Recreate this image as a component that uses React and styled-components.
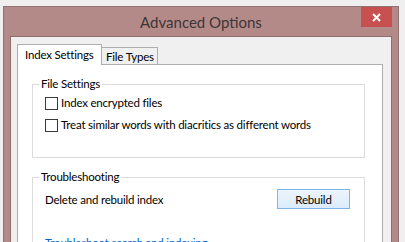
import React from 'react'
import styled, { createGlobalStyle } from 'styled-components'

const GlobalStyle = createGlobalStyle`
    html, body {
        margin: 0;
        padding: 0;
        background: #efefef;
        overflow: hidden;
    }
    body {
        width: 405px;
        height: 242px;
        box-sizing: border-box;
        padding: 6px 0 0 3px;
        font-family: Lato, Roboto, "Liberation Sans", sans-serif;
        font-size: 11.5px;
        letter-spacing: -0.2px;
        color: #000;
    }
`;

const Window = styled.div`
    width: 396px;
    height: 236px;
    overflow: hidden;
    box-sizing: border-box;
    border: 1px solid #917373;
    border-bottom: none;
    background: #b48a89;
    padding: 0 6px;
    display: flex;
    flex-direction: column;
`;

const TitleBar = styled.div`
    flex: none;
    height: 29px;
    display: grid;
    grid-template-columns: 1fr auto 1fr;
    align-items: center;
`;

const Title = styled.div`
    grid-column: 2;
    font-size: 15px;
    letter-spacing: 0;
    color: #3c3636;
    margin-top: 1px;
`;

const CloseButton = styled.div`
    grid-column: 3;
    justify-self: end;
    align-self: start;
    width: 31px;
    height: 20px;
    background: #c75050;
    display: flex;
    align-items: center;
    justify-content: center;
`;

const Client = styled.div`
    flex: 1;
    min-height: 0;
    border: 1px solid #8d6f6f;
    border-bottom: none;
    background: #f0f0f0;
    padding: 7px 0 0 6px;
    display: flex;
    flex-direction: column;
`;

const TabRow = styled.div`
    flex: none;
    display: flex;
    align-items: flex-end;
    height: 20px;
`;

const Tab = styled.div`
    position: relative;
    box-sizing: border-box;
    white-space: nowrap;
    border: 1px solid #adadad;
    border-bottom: none;
    display: flex;
    align-items: center;
    background: ${p => (p.active ? '#fff' : '#f0f0f0')};
    height: ${p => (p.active ? '21px' : '17px')};
    width: ${p => p.w}px;
    padding-left: ${p => (p.active ? '7px' : '4px')};
    margin-bottom: ${p => (p.active ? '-1px' : '0')};
    margin-left: ${p => (p.active ? '0' : '-1px')};
    padding-bottom: ${p => (p.active ? '2px' : '0')};
    z-index: ${p => (p.active ? 1 : 0)};
`;

const Panel = styled.div`
    width: 366px;
    flex: 1;
    min-height: 0;
    box-sizing: border-box;
    border: 1px solid #adadad;
    border-bottom: none;
    background: #fff;
    padding: 11px 0 0 14px;
`;

const Group = styled.fieldset`
    width: 333px;
    box-sizing: border-box;
    margin: ${p => (p.first ? '0' : '11px')} 0 0 0;
    padding: 0;
    border: 1px solid #dcdcdc;
`;

const Legend = styled.legend`
    margin-left: 6px;
    padding: 0 2px;
    line-height: 16px;
`;

const GroupBody = styled.div`
    display: flex;
    flex-direction: column;
    gap: ${p => p.gap}px;
    padding: ${p => p.pad};
`;

const CheckRow = styled.label`
    display: flex;
    align-items: center;
    gap: 3px;
    height: 16px;
    line-height: 16px;
`;

const Box = styled.span`
    width: 13px;
    height: 13px;
    box-sizing: border-box;
    border: 1px solid #3a3a3a;
    background: #fff;
`;

const ActionRow = styled.div`
    display: flex;
    align-items: center;
    justify-content: space-between;
    height: 20px;
`;

const Button = styled.div`
    width: 73px;
    height: 20px;
    box-sizing: border-box;
    border: 1px solid #7eb4ea;
    background: linear-gradient(#ecf4fc, #dcecfc);
    display: flex;
    align-items: center;
    justify-content: center;
`;

const Link = styled.div`
    color: #0066cc;
    line-height: 16px;
`;

const App = () => (
    <>
        <GlobalStyle />
        <Window>
            <TitleBar>
                <Title>Advanced Options</Title>
                <CloseButton>
                    <svg width="9" height="9" viewBox="0 0 9 9">
                        <path d="M1 1L8 8M8 1L1 8" stroke="#fff" strokeWidth="2" />
                    </svg>
                </CloseButton>
            </TitleBar>
            <Client>
                <TabRow>
                    <Tab active w={85}>Index Settings</Tab>
                    <Tab w={57}>File Types</Tab>
                </TabRow>
                <Panel>
                    <Group first>
                        <Legend>File Settings</Legend>
                        <GroupBody gap={6} pad="3px 12px 24px">
                            <CheckRow><Box />Index encrypted files</CheckRow>
                            <CheckRow><Box />Treat similar words with diacritics as different words</CheckRow>
                        </GroupBody>
                    </Group>
                    <Group>
                        <Legend>Troubleshooting</Legend>
                        <GroupBody gap={26} pad="4px 14px 20px 12px">
                            <ActionRow>
                                <span>Delete and rebuild index</span>
                                <Button>Rebuild</Button>
                            </ActionRow>
                            <Link>Troubleshoot search and indexing</Link>
                        </GroupBody>
                    </Group>
                </Panel>
            </Client>
        </Window>
    </>
)

export default App
